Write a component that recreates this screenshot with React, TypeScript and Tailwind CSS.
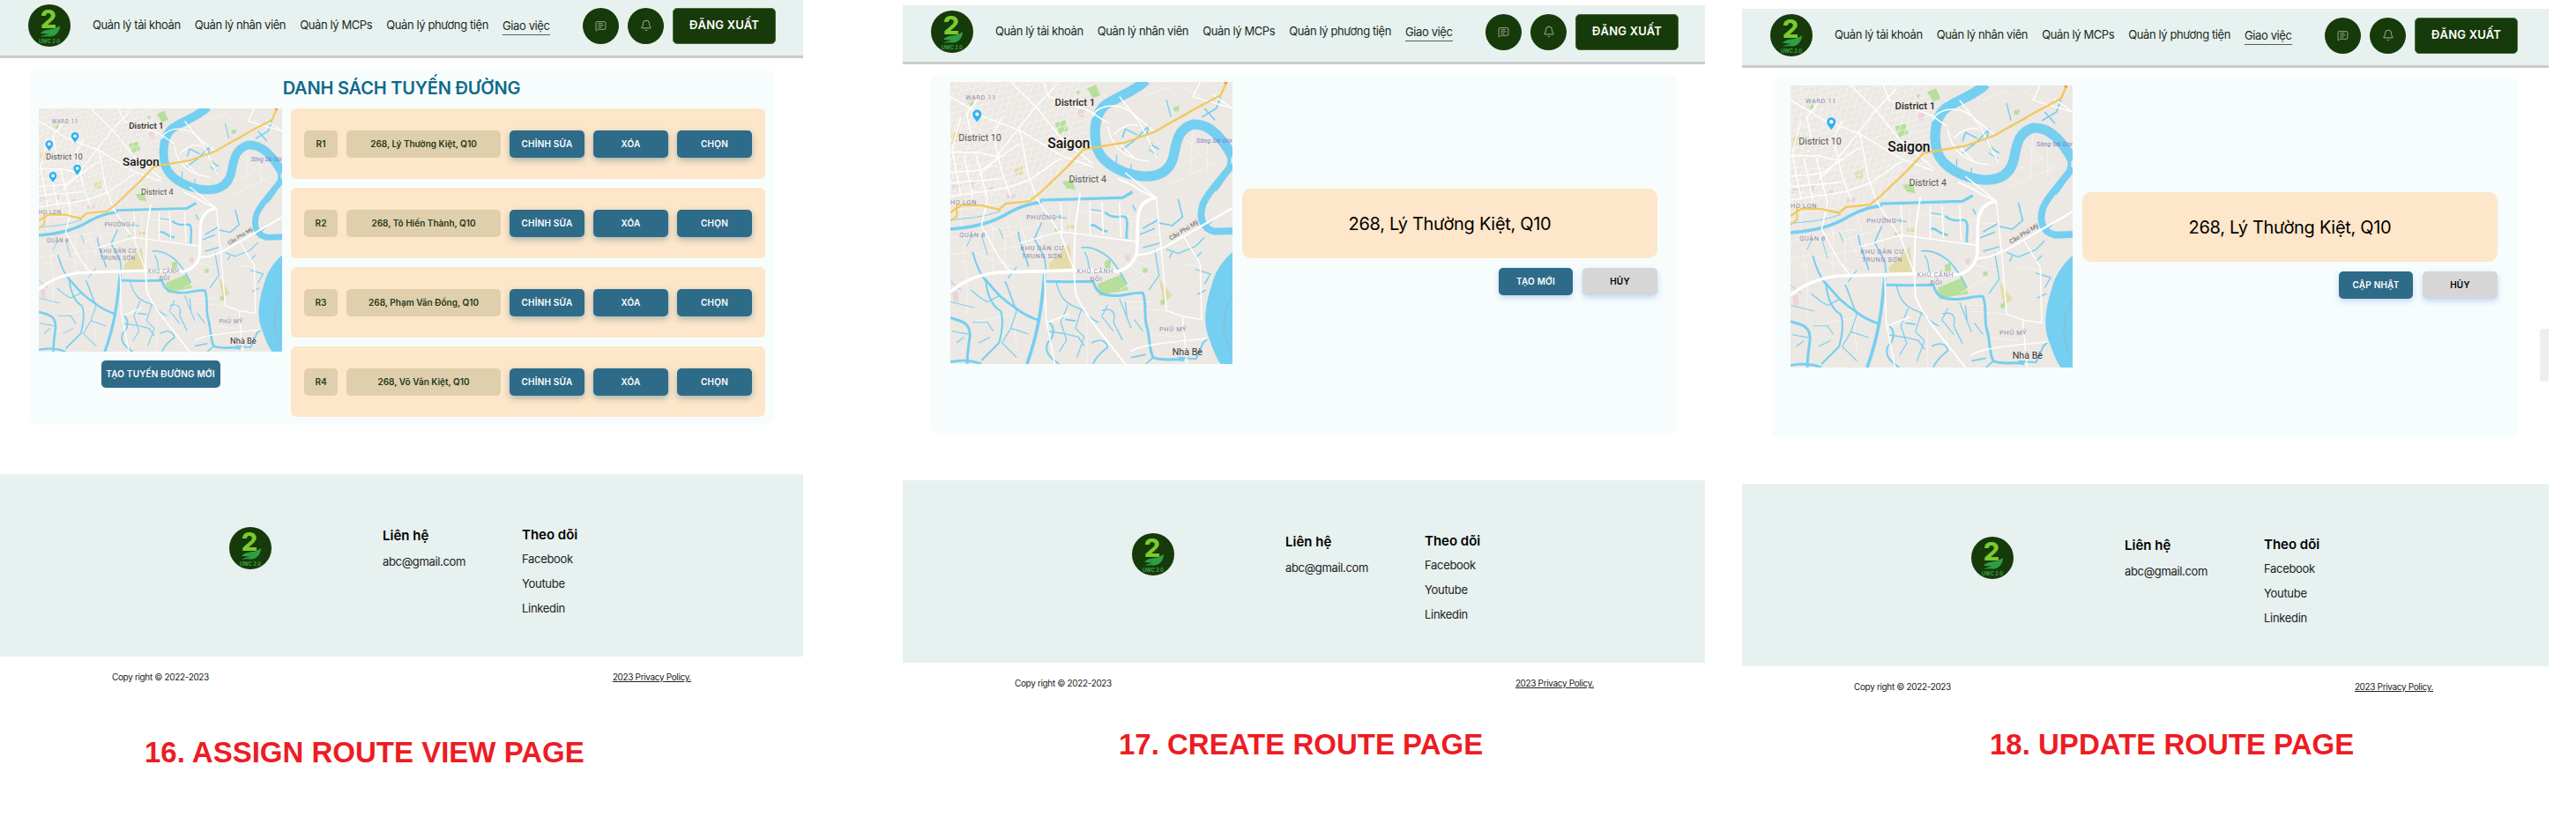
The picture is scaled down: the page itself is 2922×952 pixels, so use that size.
import { Bell, MessageSquareText } from "lucide-react";

const FONT = "font-['Inter','Noto_Sans',sans-serif]";

function Logo({ className }: { className: string }) {
  return (
    <svg viewBox="0 0 48 48" className={className}>
      <circle cx="24" cy="24" r="24" fill="#163a0a" />
      <text x="23" y="27" textAnchor="middle" fontFamily="Inter, sans-serif" fontWeight="800" fontSize="29" fill="#7cc92f">2</text>
      <path d="M14 33 C19 26 27 31 36 24 C36 31 31 37 24 36.5 C20 36 17 36 14 37 C17 35 20 34 24 34 C20 33 17 33 14 33 Z" fill="#2f9e44" />
      <text x="24" y="44" textAnchor="middle" fontFamily="Inter, sans-serif" fontWeight="600" fontSize="5.6" fill="#3fae4f">UWC 2.0</text>
    </svg>
  );
}

function Header({ className }: { className: string }) {
  const items = ["Quản lý tải khoản", "Quản lý nhân viên", "Quản lý MCPs", "Quản lý phương tiện"];
  return (
    <header className={`flex items-center w-full bg-[#e7f1ef] border-b-[3px] border-[#c9cccb] pb-[5px] ${className}`}>
      <div className="flex items-center w-[880px] pl-[32px]">
        <Logo className="w-[48px] h-[48px] shrink-0" />
        <nav className="flex items-center gap-[16px] ml-[25px] text-[13px] text-[#1c2a1c] whitespace-nowrap tracking-[-0.4px]">
          {items.map((t) => (
            <span key={t} className="leading-[20px] border-b-2 border-transparent">{t}</span>
          ))}
          <span className="leading-[20px] border-b border-[#55605c]">Giao việc</span>
        </nav>
        <div className="flex items-center ml-auto gap-[10px]">
          <span className="flex items-center justify-center w-[41px] h-[41px] rounded-full bg-[#163a0a] text-[#d5dfce]">
            <MessageSquareText size={13} strokeWidth={1.25} />
          </span>
          <span className="flex items-center justify-center w-[41px] h-[41px] rounded-full bg-[#163a0a] text-[#d5dfce]">
            <Bell size={14} strokeWidth={1.25} />
          </span>
          <span className="flex items-center justify-center w-[117px] h-[41px] rounded-[5px] bg-[#163a0a] border border-[#4a6a3c] text-white text-[13px] font-semibold tracking-[0.2px]">
            ĐĂNG XUẤT
          </span>
        </div>
      </div>
    </header>
  );
}

const WATER_THICK = [
  { d: "M690 5 C650 45 590 60 550 90 C515 120 510 190 525 240 C545 290 610 325 680 332 C740 335 775 310 785 260 C795 210 800 170 850 155 C905 150 950 200 985 265", w: 34 },
  { d: "M985 290 C950 340 905 380 885 425 C870 470 880 510 925 520 L985 518", w: 24 },
  { d: "M970 250 C985 290 960 340 925 380", w: 12 },
];
const WATER_THIN = [
  { d: "M330 413 L610 405 L645 385", w: 10 },
  { d: "M24 512 C110 505 170 490 225 455 C270 430 300 425 335 420", w: 11 },
  { d: "M24 480 C90 475 140 470 195 450", w: 3 },
  { d: "M345 665 C340 720 335 770 325 825 C315 880 300 930 285 972", w: 11 },
  { d: "M140 680 C175 720 190 745 245 780 C275 805 300 815 330 825", w: 8 },
  { d: "M24 815 C60 825 95 830 90 880 C85 920 80 950 82 972", w: 9 },
  { d: "M24 965 C70 955 100 960 130 972", w: 8 },
  { d: "M100 590 C110 630 130 670 145 690 C150 740 170 780 195 790", w: 6 },
  { d: "M210 690 C225 720 235 760 250 790", w: 5 },
  { d: "M190 740 L150 760 L125 745 L95 720", w: 4 },
  { d: "M195 790 C210 830 195 880 190 900 L130 960", w: 6 },
  { d: "M350 690 L420 692 L510 690 C520 720 530 735 570 738 C610 745 650 725 680 730 C695 770 680 810 695 850 C705 890 700 920 715 950 C750 965 790 950 820 960", w: 9 },
  { d: "M360 830 C380 845 380 880 355 900 C345 930 360 950 395 972", w: 6 },
  { d: "M355 860 L420 870 L460 880 L480 910", w: 4 },
  { d: "M415 820 L450 825 M505 900 C530 885 555 890 560 915 C540 930 520 950 510 972", w: 5 },
  { d: "M540 790 C570 780 590 790 580 830 L610 890 M620 760 L625 810", w: 4 },
  { d: "M385 695 C400 750 420 770 470 785 C490 800 500 820 530 830", w: 4 },
  { d: "M470 575 C500 570 530 580 565 610 C590 635 610 670 625 700", w: 5 },
  { d: "M480 590 C500 610 490 640 500 650", w: 4 },
  { d: "M550 455 C580 480 600 465 620 470 C635 490 620 520 625 545", w: 8 },
  { d: "M500 500 C520 490 530 520 560 520", w: 8 },
  { d: "M420 475 L385 470 M500 445 L540 450", w: 4 },
  { d: "M680 510 C700 495 720 490 730 480 M670 530 L720 510 M680 575 L735 560", w: 5 },
  { d: "M800 410 L815 470 L780 500 L730 490", w: 5 },
  { d: "M760 580 L800 595 L860 570 L890 540 M770 610 L780 590", w: 4 },
  { d: "M720 580 L735 670 L700 720", w: 4 },
  { d: "M255 520 C260 570 285 610 290 640 M335 490 L310 545 L345 610 L350 650", w: 5 },
  { d: "M130 530 L150 600 M190 510 L205 545 M100 530 L80 570", w: 3 },
  { d: "M645 430 L655 450 M610 240 L650 210 L700 160 L690 200 M710 225 L735 240 M660 190 L620 170 L610 200", w: 5 },
  { d: "M880 130 L930 100 L945 60 M890 100 L925 140", w: 5 },
  { d: "M760 70 L775 130 M790 140 L830 120", w: 4 },
  { d: "M590 260 L590 285 M640 290 L640 310 M700 240 L730 260", w: 4 },
  { d: "M860 650 L910 665 L890 700 M865 735 L895 720", w: 4 },
  { d: "M25 690 L60 720 M25 760 L105 780", w: 3 },
  { d: "M220 680 L250 640 M250 790 L230 850 L200 900 L250 950 M230 850 L290 870", w: 3.5 },
  { d: "M100 830 L150 830 L170 860 M120 900 L160 880 M45 900 L70 880 M30 860 L85 870", w: 3.5 },
  { d: "M425 770 L400 830 L420 890 L395 930 M470 785 L450 850 L480 880 L455 950", w: 3.5 },
  { d: "M560 770 L540 810 L580 860 M600 750 L620 800 L640 850 M650 820 L680 860", w: 3.5 },
  { d: "M800 950 L860 955 L885 900 L900 885", w: 6 },
  { d: "M715 950 L690 972 M640 950 L690 940", w: 5 },
  { d: "M860 610 L880 590 M900 500 L930 470", w: 4 },
];
const ROADS_BIG = [
  { d: "M24 725 C70 690 110 670 180 660 L440 652 L600 655 C640 640 658 610 660 580 L662 480 C665 440 680 410 725 405", w: 11 },
  { d: "M725 405 L680 385 L640 360 L595 340", w: 6 },
  { d: "M700 595 L760 570 L830 530 L985 440", w: 7 },
  { d: "M660 600 L700 595", w: 7 },
  { d: "M466 390 L450 500 L445 650 L450 730 C470 790 540 870 620 972", w: 6 },
];
const ROADS = [
  "M725 405 L745 600 L760 790 L815 810 L830 972",
  "M815 810 L880 820 L875 630 L820 540",
  "M640 930 C660 910 740 900 900 885",
  "M24 60 L140 130 L260 175 L400 260 L510 300",
  "M230 10 L320 100 L400 200 L510 290",
  "M340 10 L360 60 L500 110 L560 150",
  "M24 250 L120 250 L180 265 L240 190 L310 100 L385 20",
  "M24 320 L130 310 L260 220",
  "M110 250 L150 410 L130 500 L190 610 L230 660",
  "M260 170 L290 330 L320 410 L400 530 L445 650",
  "M60 130 L30 240 L60 400",
  "M130 50 L80 120 L95 190",
  "M200 130 L170 190 L200 320 L230 400",
  "M24 400 L130 385 L220 370 L300 340 L400 270",
  "M24 355 L200 340",
  "M70 260 L100 400 M195 260 L120 330",
  "M400 520 L660 555",
  "M260 560 L400 520",
  "M400 420 L405 530 M540 420 L545 530 M600 420 L605 540 M500 420 L500 530",
  "M725 405 L620 320",
  "M510 130 C510 100 590 60 660 130 L720 180",
  "M580 190 C610 160 640 150 665 160",
  "M560 160 C570 230 620 275 700 280",
  "M600 60 L670 150 L730 270",
  "M880 0 L850 60 L985 100",
  "M600 220 L650 270",
  "M920 55 L985 100",
  "M355 830 L430 800 M345 660 L350 820 L380 972",
];
const ROADS_THIN = [
  "M24 210 L100 240 M45 140 L130 170 M30 290 L210 300 M30 370 L210 400 M140 430 L170 520 M60 440 L60 510",
  "M210 470 L250 590 M250 450 L290 590 M300 420 L340 560 M200 540 L320 500 M130 590 L330 560 M100 590 L260 650",
  "M430 430 L430 520 M470 450 L650 470 M640 480 L640 560 M670 480 L730 480 M670 530 L740 530",
  "M590 600 L720 700 M640 620 L730 640 M600 720 L700 660",
  "M45 620 L80 620 L80 800 M25 600 L90 590 M100 830 L250 800 M240 810 L250 920 M350 840 L430 810 M490 830 L490 972",
  "M540 780 L560 900 M640 780 L760 790 M700 870 L800 880 M620 760 L720 760 M800 630 L880 640",
  "M800 180 L920 300 M790 300 L880 260 M770 360 L940 280 M850 170 L840 330 M900 210 L900 320",
  "M540 50 L600 110 M680 60 L760 30 L800 60 M820 30 L880 60",
  "M30 450 L300 410 M25 540 L250 500 M170 670 L170 500 M210 660 L210 520 M70 560 L70 640",
];
const PARKS = [
  "M490 32 L520 20 L535 55 L510 65 Z",
  "M380 150 L415 140 L425 175 L395 190 Z",
  "M405 350 L440 345 L450 378 L420 372 Z",
  "M78 80 L105 70 L100 95 Z",
  "M525 700 L610 665 L630 720 L570 730 L535 740 Z",
  "M550 620 L570 615 L570 645 L550 645 Z",
  "M785 95 L805 92 L800 110 L785 110 Z",
  "M380 510 L395 510 L395 520 L380 520 Z",
  "M680 645 L695 645 L695 660 L680 660 Z",
  "M740 755 L755 750 L755 770 L740 770 Z",
  "M590 715 L605 715 L600 725 Z",
  "M700 210 L715 220 L705 235 Z",
  "M450 40 L465 40 L460 55 Z",
];
const TAN = [
  "M28 185 L55 175 L45 215 L28 220 Z",
  "M240 310 L270 295 L270 325 L250 330 Z",
  "M360 630 L430 560 L440 650 L360 650 Z",
  "M735 680 L780 740 L750 760 Z",
  "M525 715 L550 730 L530 740 Z",
  "M420 498 L450 498 L450 510 L420 510 Z",
];
const PINK = [
  "M30 360 L60 360 L58 378 L30 378 Z",
  "M85 350 L105 350 L105 370 L85 370 Z",
  "M460 100 L485 100 L475 130 L458 125 Z",
  "M30 725 L50 725 L52 760 L35 760 Z",
  "M620 600 L635 600 L635 620 L620 620 Z",
  "M215 395 L245 392 L245 405 L215 407 Z",
  "M150 370 L170 365 L170 378 L150 380 Z",
];

const STREET_A = Array.from({ length: 22 }, (_, i) => `M${24 + i * 22} 10 L${24 + i * 22 - 130} 420`);
const STREET_B = Array.from({ length: 20 }, (_, i) => `M24 ${i * 22 + 10} L500 ${i * 22 - 130}`);

function Pin({ x, y }: { x: number; y: number }) {
  return (
    <g transform={`translate(${x} ${y})`}>
      <path d="M0 22 C-10 8 -15 2 -15 -5 A15 15 0 1 1 15 -5 C15 2 10 8 0 22 Z" fill="#2ab3f3" />
      <circle cx="0" cy="-5" r="6.5" fill="#fff" />
    </g>
  );
}

function MapArt({ className, pins, clip }: { className: string; pins: [number, number][]; clip: string }) {
  const label = "Roboto, sans-serif";
  return (
    <svg viewBox="24 10 961 962" preserveAspectRatio="none" className={className}>
      <defs>
        <clipPath id={clip}>
          <path d="M24 10 L500 10 L510 300 L330 400 L24 440 Z" />
        </clipPath>
      </defs>
      <rect x="24" y="10" width="961" height="962" fill="#ece8e3" />
      {TAN.map((d) => <path key={d} d={d} fill="#e4dbab" />)}
      {PINK.map((d) => <path key={d} d={d} fill="#ecd3d8" />)}
      {PARKS.map((d) => <path key={d} d={d} fill="#b7df9b" />)}
      <g clipPath={`url(#${clip})`} fill="none" stroke="#f8f6f3" strokeWidth="2.2">
        {STREET_A.map((d) => <path key={d} d={d} />)}
        {STREET_B.map((d) => <path key={d} d={d} />)}
      </g>
      {ROADS_THIN.map((d) => <path key={d} d={d} fill="none" stroke="#f8f6f3" strokeWidth="2.5" />)}
      <path d="M985 590 C950 620 925 660 915 700 C895 760 885 820 900 870 C915 910 925 945 945 972 L985 972 Z" fill="#75cff1" />
      <path d="M985 740 L960 790 L955 860 L975 930" fill="none" stroke="#a9a9ad" strokeWidth="3" strokeDasharray="8 3" />
      {WATER_THICK.map((r) => <path key={r.d} d={r.d} fill="none" stroke="#75cff1" strokeWidth={r.w} />)}
      {WATER_THIN.map((r) => <path key={r.d} d={r.d} fill="none" stroke="#75cff1" strokeWidth={r.w} strokeLinejoin="round" />)}
      {ROADS.map((d) => <path key={d} d={d} fill="none" stroke="#fff" strokeWidth="4.5" />)}
      {ROADS_BIG.map((r) => <path key={r.d} d={r.d} fill="none" stroke="#fff" strokeWidth={r.w} />)}
      <path d="M24 455 L62 430 L130 431 L190 445 L212 425 L295 416 L330 388 L420 302 L478 240 L620 216 L720 180 L860 100 L945 55 L965 10" fill="none" stroke="#f2c85a" strokeWidth="7" />
      <path d="M46 425 L46 468 L24 485" fill="none" stroke="#f2c85a" strokeWidth="6" />
      <circle cx="962" cy="12" r="6" fill="#f59e42" />
      <g fontFamily={label}>
        <text x="380" y="91" fontSize="34" fontWeight="500" fill="#2a2a2a">District 1</text>
        <text x="355" y="235" fontSize="47" fontWeight="500" fill="#111">Saigon</text>
        <text x="52" y="212" fontSize="32" fill="#555">District 10</text>
        <text x="428" y="353" fontSize="32" fill="#555">District 4</text>
        <text x="780" y="942" fontSize="32" fill="#333">Nhà Bè</text>
        <g fill="#8b8bab" fontSize="22" letterSpacing="2">
          <text x="75" y="70">WARD 11</text>
          <text x="24" y="428">HO LON</text>
          <text x="283" y="478">PHƯỜNG 1</text>
          <text x="55" y="540">QUẬN 8</text>
          <text x="263" y="583">KHU DÂN CƯ</text>
          <text x="267" y="610">TRUNG SƠN</text>
          <text x="455" y="662">KHU CẢNH</text>
          <text x="500" y="688">ĐÔI</text>
          <text x="736" y="862">PHÚ MỸ</text>
        </g>
        <text x="862" y="218" fontSize="22" fontStyle="italic" fill="#7383c9">Sông Sài Gòn</text>
        <text x="775" y="550" fontSize="21" fill="#555" transform="rotate(-31 775 550)">Cầu Phú Mỹ</text>
      </g>
      {pins.map(([x, y]) => <Pin key={`${x}-${y}`} x={x} y={y} />)}
    </svg>
  );
}

function Footer({ className }: { className: string }) {
  return (
    <footer className={`flex items-start w-full h-[207px] bg-[#e7f1ef] pt-[60px] ${className}`}>
      <Logo className="w-[48px] h-[48px] ml-[260px] shrink-0" />
      <div className="ml-[126px] w-[158px]">
        <div className="text-[15px] leading-[20px] font-semibold text-black">Liên hệ</div>
        <div className="mt-[9px] text-[13px] leading-[20px] text-[#222] tracking-[-0.35px]">abc@gmail.com</div>
      </div>
      <div className="-mt-[1px]">
        <div className="text-[15px] leading-[20px] font-semibold text-black">Theo dõi</div>
        <div className="mt-[7px] flex flex-col gap-[8px] text-[13px] leading-[20px] text-[#222] tracking-[-0.3px]">
          <span>Facebook</span>
          <span>Youtube</span>
          <span>Linkedin</span>
        </div>
      </div>
    </footer>
  );
}

function Legal() {
  return (
    <div className="flex items-center justify-between w-[784px] pl-[127px] mt-[15px] text-[10px] leading-[16px] text-[#222] tracking-[-0.35px]">
      <span>Copy right © 2022-2023</span>
      <span className="underline">2023 Privacy Policy.</span>
    </div>
  );
}

function Caption({ text, className }: { text: string; className: string }) {
  return (
    <div className={`font-['Liberation_Sans',sans-serif] font-bold text-[33px] leading-[38px] text-[#ed1c24] whitespace-nowrap ${className}`}>
      {text}
    </div>
  );
}

const ACTION = "flex items-center justify-center h-[31px] rounded-[5px] text-[10px] font-semibold tracking-[0.2px] whitespace-nowrap";

function RouteRow({ id, address }: { id: string; address: string }) {
  return (
    <div className="flex items-start gap-[10px] h-[80px] pt-[25px] pl-[15px] rounded-[6px] bg-[#fde6c9]">
      <span className="flex items-center justify-center w-[38px] h-[31px] rounded-[5px] bg-[#dfcfad] text-[10px] font-semibold text-[#24391a]">{id}</span>
      <span className="flex items-center justify-center w-[175px] h-[31px] rounded-[5px] bg-[#dfcfad] text-[10px] font-semibold text-[#24391a] whitespace-nowrap">{address}</span>
      {["CHỈNH SỬA", "XÓA", "CHỌN"].map((t) => (
        <span key={t} className={`${ACTION} w-[85px] bg-[#2e6b88] text-white shadow-[0_3px_7px_rgba(46,107,136,0.4)]`}>{t}</span>
      ))}
    </div>
  );
}

function AssignCard() {
  const rows = [
    ["R1", "268, Lý Thường Kiệt, Q10"],
    ["R2", "268, Tô Hiến Thành, Q10"],
    ["R3", "268, Phạm Văn Đồng, Q10"],
    ["R4", "268, Võ Văn Kiệt, Q10"],
  ];
  return (
    <section className="ml-[33px] mt-[11px] w-[845px] h-[405px] rounded-[10px] bg-[#f7fdfd] pt-[8px]">
      <h1 className="h-[30px] text-center text-[20px] leading-[30px] font-semibold text-[#0f6a88] tracking-[-0.2px]">DANH SÁCH TUYẾN ĐƯỜNG</h1>
      <div className="flex items-start gap-[10px] mt-[8px] pl-[11px]">
        <div className="flex flex-col items-center w-[276px]">
          <MapArt clip="map-a" className="block w-[276px] h-[276px]" pins={[[167, 124], [65, 156], [176, 252], [80, 281]]} />
          <span className={`${ACTION} mt-[10px] w-[135px] bg-[#2e6b88] text-white`}>TẠO TUYẾN ĐƯỜNG MỚI</span>
        </div>
        <div className="flex flex-col gap-[10px] w-[538px]">
          {rows.map(([id, a]) => <RouteRow key={id} id={id} address={a} />)}
        </div>
      </div>
    </section>
  );
}

function EditCard({ action, pin, clip, className }: { action: string; pin: [number, number]; clip: string; className: string }) {
  return (
    <section className={`flex items-start mt-[10px] w-[846px] h-[411px] rounded-[10px] bg-[#f7fdfd] pt-[10px] ${className}`}>
      <MapArt clip={clip} className="block w-[320px] h-[320px] shrink-0" pins={[pin]} />
      <div className="ml-[11px] mt-[121px] w-[471px]">
        <div className="flex items-center justify-center h-[79px] rounded-[10px] bg-[#fde6c9] text-[20px] text-black tracking-[-0.3px]">268, Lý Thường Kiệt, Q10</div>
        <div className="flex justify-end gap-[11px] mt-[11px]">
          <span className={`${ACTION} w-[84px] bg-[#2e6b88] text-white shadow-[0_3px_7px_rgba(70,130,220,0.3)]`}>{action}</span>
          <span className={`${ACTION} w-[85px] bg-[#d6d6d6] text-black shadow-[0_3px_7px_rgba(70,130,220,0.3)]`}>HỦY</span>
        </div>
      </div>
    </section>
  );
}

export default function App() {
  return (
    <div className={`relative flex items-start w-[2922px] h-[952px] overflow-hidden bg-white ${FONT}`}>
      <div className="w-[911px] shrink-0">
        <Header className="h-[66px]" />
        <AssignCard />
        <Footer className="mt-[56px]" />
        <Legal />
        <Caption text="16. ASSIGN ROUTE VIEW PAGE" className="ml-[164px] mt-[59px]" />
      </div>
      <div className="w-[910px] shrink-0 ml-[113px] pt-[6px]">
        <Header className="h-[67px] pt-[1px]" />
        <EditCard action="TẠO MỚI" pin={[115, 125]} clip="map-b" className="ml-[32px] pl-[22px]" />
        <Footer className="mt-[51px]" />
        <Legal />
        <Caption text="17. CREATE ROUTE PAGE" className="ml-[245px] mt-[43px]" />
      </div>
      <div className="w-[915px] shrink-0 ml-[42px] pt-[10px]">
        <Header className="h-[67px] pt-[1px]" />
        <EditCard action="CẬP NHẬT" pin={[163, 139]} clip="map-c" className="ml-[34px] pl-[21px]" />
        <Footer className="mt-[51px]" />
        <Legal />
        <Caption text="18. UPDATE ROUTE PAGE" className="ml-[281px] mt-[39px]" />
      </div>
      <div className="absolute left-[2881px] top-[373px] w-[10px] h-[60px] rounded-l-[4px] bg-[#eeeeee]" />
    </div>
  );
}
